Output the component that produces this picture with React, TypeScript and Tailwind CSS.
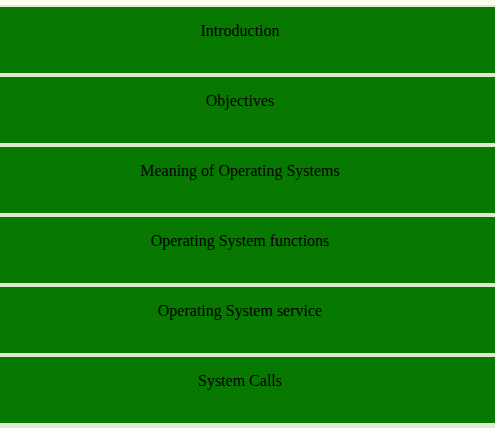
export default function App() {
  const items = [
    "Introduction",
    "Objectives",
    "Meaning of Operating Systems",
    "Operating System functions",
    "Operating System service",
    "System Calls",
  ];
  return (
    <div className="min-h-[428px] w-[495px] bg-[#fffcee] pt-[5px] font-['Liberation_Serif',serif] text-[16px] text-black">
      {items.map((t) => (
        <div
          key={t}
          className="h-[70px] border-y-2 border-[#dfe9d0] bg-[#077900] pr-[15px] pt-[15px] text-center leading-[18px]"
        >
          {t}
        </div>
      ))}
      <div className="h-[3px] bg-[#dfe9d0]" />
    </div>
  );
}
